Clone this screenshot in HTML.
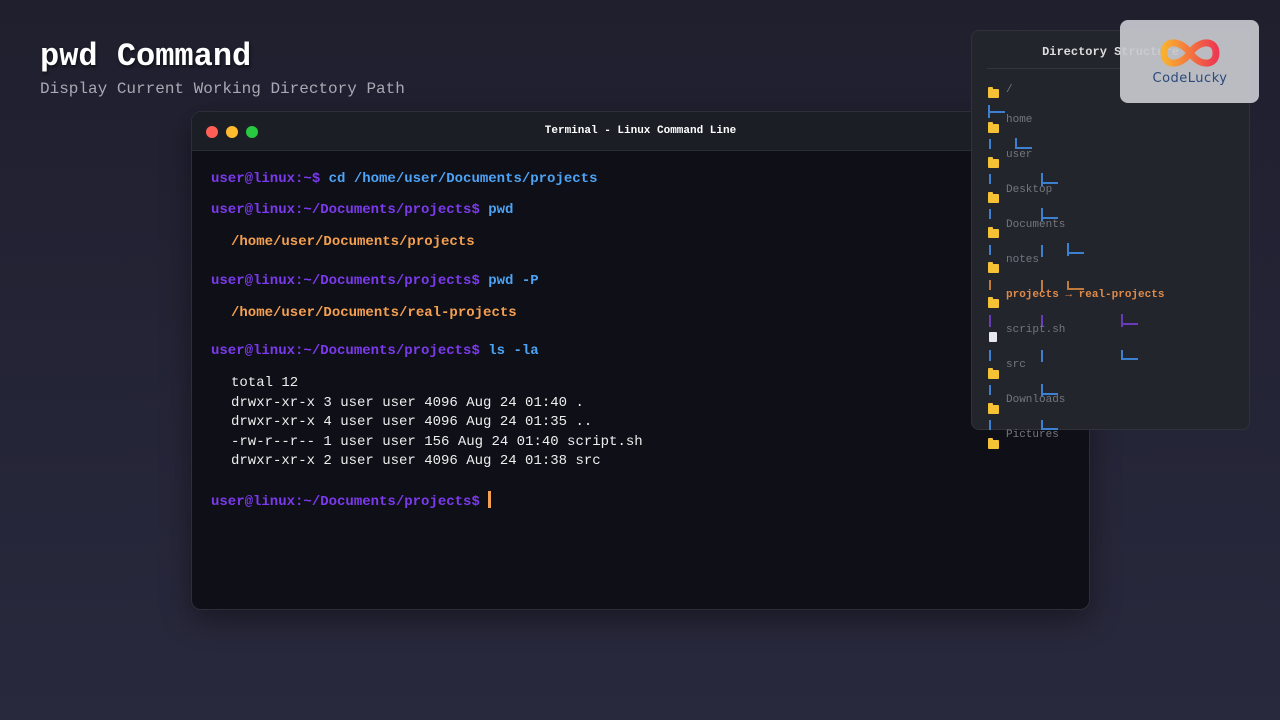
<!DOCTYPE html>
<html><head><meta charset="utf-8"><style>
*{margin:0;padding:0;box-sizing:border-box}
body{width:1280px;height:720px;overflow:hidden;background:linear-gradient(180deg,#1f1f2e 0%,#252538 60%,#29293d 100%);font-family:"Liberation Mono",monospace;position:relative}
.t{position:absolute;left:40px;top:38px;font-size:32px;font-weight:bold;color:#fff;text-shadow:1px 2px 3px rgba(0,0,0,.5)}
.s{position:absolute;left:40px;top:80px;font-size:16px;color:#a9a9b4}
.term{position:absolute;left:191px;top:111px;width:899px;height:499px;background:#0e0f17;border-radius:10px;border:1px solid #2c2e38;box-shadow:0 10px 30px rgba(0,0,0,.4);overflow:hidden}
.bar{height:39px;background:#1c1e26;border-bottom:1px solid #2a2c34;position:relative}
.dot{position:absolute;top:14px;width:12px;height:12px;border-radius:50%}
.bt{position:absolute;left:0;right:0;top:13px;text-align:center;color:#fff;font-size:11px;font-weight:bold}
.l{position:absolute;left:19px;font-size:14px;font-weight:bold;white-space:pre}
.p{color:#7c3aed}.c{color:#4da3f5}.o{color:#f5a050}
.w{position:absolute;left:39px;font-size:14px;color:#eee;white-space:pre;line-height:19.6px}
.panel{position:absolute;left:971px;top:30px;width:279px;height:400px;background:#23252d;border:1px solid #30323a;border-radius:8px}
.ph{position:absolute;left:0;right:0;top:14px;text-align:center;color:#ddd;font-size:12px;font-weight:bold}
.hr{position:absolute;left:15px;right:15px;top:37px;border-top:1px solid #33353d}
.tr{position:absolute;font-size:11px;color:#74767e;white-space:pre}
.f{position:absolute;width:11px;height:9px;background:#f5c235;border-radius:1px}
.f:before{content:"";position:absolute;left:0;top:-2px;width:5px;height:3px;background:#f5c235;border-radius:1px 1px 0 0}
.v{position:absolute;width:2px;height:13px;background:#3d7fd0}
.h{position:absolute;width:17px;height:2px;background:#3d7fd0}
.logo{position:absolute;left:1120px;top:20px;width:139px;height:83px;background:rgba(200,201,207,.92);border-radius:8px}
</style></head><body>
<div class="t">pwd Command</div>
<div class="s">Display Current Working Directory Path</div>
<div class="term">
<div class="bar"><div class="dot" style="left:14px;background:#ff5f57"></div><div class="dot" style="left:34px;background:#febc2e"></div><div class="dot" style="left:54px;background:#28c840"></div><div class="bt">Terminal - Linux Command Line</div></div>
<div class="l" style="top:59px"><span class="p">user@linux:~$</span> <span class="c">cd /home/user/Documents/projects</span></div>
<div class="l" style="top:90px"><span class="p">user@linux:~/Documents/projects$</span> <span class="c">pwd</span></div>
<div class="l o" style="top:122px;left:39px">/home/user/Documents/projects</div>
<div class="l" style="top:161px"><span class="p">user@linux:~/Documents/projects$</span> <span class="c">pwd -P</span></div>
<div class="l o" style="top:193px;left:39px">/home/user/Documents/real-projects</div>
<div class="l" style="top:231px"><span class="p">user@linux:~/Documents/projects$</span> <span class="c">ls -la</span></div>
<div class="w" style="top:262px">total 12
drwxr-xr-x 3 user user 4096 Aug 24 01:40 .
drwxr-xr-x 4 user user 4096 Aug 24 01:35 ..
-rw-r--r-- 1 user user 156 Aug 24 01:40 script.sh
drwxr-xr-x 2 user user 4096 Aug 24 01:38 src</div>
<div class="l" style="top:379px"><span class="p">user@linux:~/Documents/projects$</span> <span style="display:inline-block;width:3px;height:17px;background:#f5a050;vertical-align:-3px"></span></div>
</div>
<div class="panel"><div class="ph">Directory Structure</div><div class="hr"></div></div>

<div class="f" style="left:988px;top:89px"></div><div class="tr" style="left:1006px;top:84px">/</div>
<div class="v" style="left:988px;top:105px"></div><div class="h" style="left:988px;top:111px"></div>
<div class="f" style="left:988px;top:124px"></div><div class="tr" style="left:1006px;top:114px">home</div>
<div class="v" style="left:989px;top:139px;height:10px"></div><div class="v" style="left:1015px;top:138px;height:10px"></div><div class="h" style="left:1015px;top:147px"></div>
<div class="f" style="left:988px;top:159px"></div><div class="tr" style="left:1006px;top:149px">user</div>
<div class="v" style="left:989px;top:174px;height:10px"></div><div class="v" style="left:1041px;top:173px"></div><div class="h" style="left:1041px;top:182px"></div>
<div class="f" style="left:988px;top:194px"></div><div class="tr" style="left:1006px;top:184px">Desktop</div>
<div class="v" style="left:989px;top:209px;height:10px"></div><div class="v" style="left:1041px;top:208px"></div><div class="h" style="left:1041px;top:217px"></div>
<div class="f" style="left:988px;top:229px"></div><div class="tr" style="left:1006px;top:219px">Documents</div>
<div class="v" style="left:989px;top:245px;height:10px"></div><div class="v" style="left:1041px;top:245px;height:12px"></div><div class="v" style="left:1067px;top:243px"></div><div class="h" style="left:1067px;top:252px"></div>
<div class="f" style="left:988px;top:264px"></div><div class="tr" style="left:1006px;top:254px">notes</div>
<div class="v" style="left:989px;top:280px;height:10px;background:#c07a3a"></div><div class="v" style="left:1041px;top:280px;height:12px;background:#c07a3a"></div><div class="v" style="left:1067px;top:281px;height:8px;background:#c07a3a"></div><div class="h" style="left:1067px;top:288px;background:#c07a3a"></div>
<div class="f" style="left:988px;top:299px"></div><div class="tr" style="left:1006px;top:289px;color:#e08a48;font-weight:bold">projects → real-projects</div>
<div class="v" style="left:989px;top:315px;height:12px;background:#6a3ab8"></div><div class="v" style="left:1041px;top:315px;height:12px;background:#6a3ab8"></div><div class="v" style="left:1121px;top:314px;background:#6a3ab8"></div><div class="h" style="left:1121px;top:323px;background:#6a3ab8"></div>
<div style="position:absolute;left:989px;top:332px;width:8px;height:10px;background:#e8e8ee;border-radius:1px"></div><div class="tr" style="left:1006px;top:324px">script.sh</div>
<div class="v" style="left:989px;top:350px;height:11px"></div><div class="v" style="left:1041px;top:350px;height:12px"></div><div class="v" style="left:1121px;top:350px;height:9px"></div><div class="h" style="left:1121px;top:358px"></div>
<div class="f" style="left:988px;top:370px"></div><div class="tr" style="left:1006px;top:359px">src</div>
<div class="v" style="left:989px;top:385px;height:10px"></div><div class="v" style="left:1041px;top:384px"></div><div class="h" style="left:1041px;top:393px"></div>
<div class="f" style="left:988px;top:405px"></div><div class="tr" style="left:1006px;top:394px">Downloads</div>
<div class="v" style="left:989px;top:420px;height:10px"></div><div class="v" style="left:1041px;top:420px;height:9px"></div><div class="h" style="left:1041px;top:428px"></div>
<div class="f" style="left:988px;top:440px"></div><div class="tr" style="left:1006px;top:429px">Pictures</div>

<div class="logo">
<svg width="139" height="83" viewBox="0 0 139 83"><defs><linearGradient id="lg" x1="0" x2="1"><stop offset="0" stop-color="#f8b030"/><stop offset="1" stop-color="#ee3a50"/></linearGradient></defs>
<path d="M70 33 C60 19 44 20 44 33 C44 46 60 47 70 33 C80 19 96 20 96 33 C96 46 80 47 70 33Z" fill="none" stroke="url(#lg)" stroke-width="7"/>
<text x="70" y="62" text-anchor="middle" font-family="DejaVu Sans,sans-serif" font-size="13" fill="#2a4a7a" letter-spacing="0.5">CodeLucky</text></svg>
</div>
</body></html>
